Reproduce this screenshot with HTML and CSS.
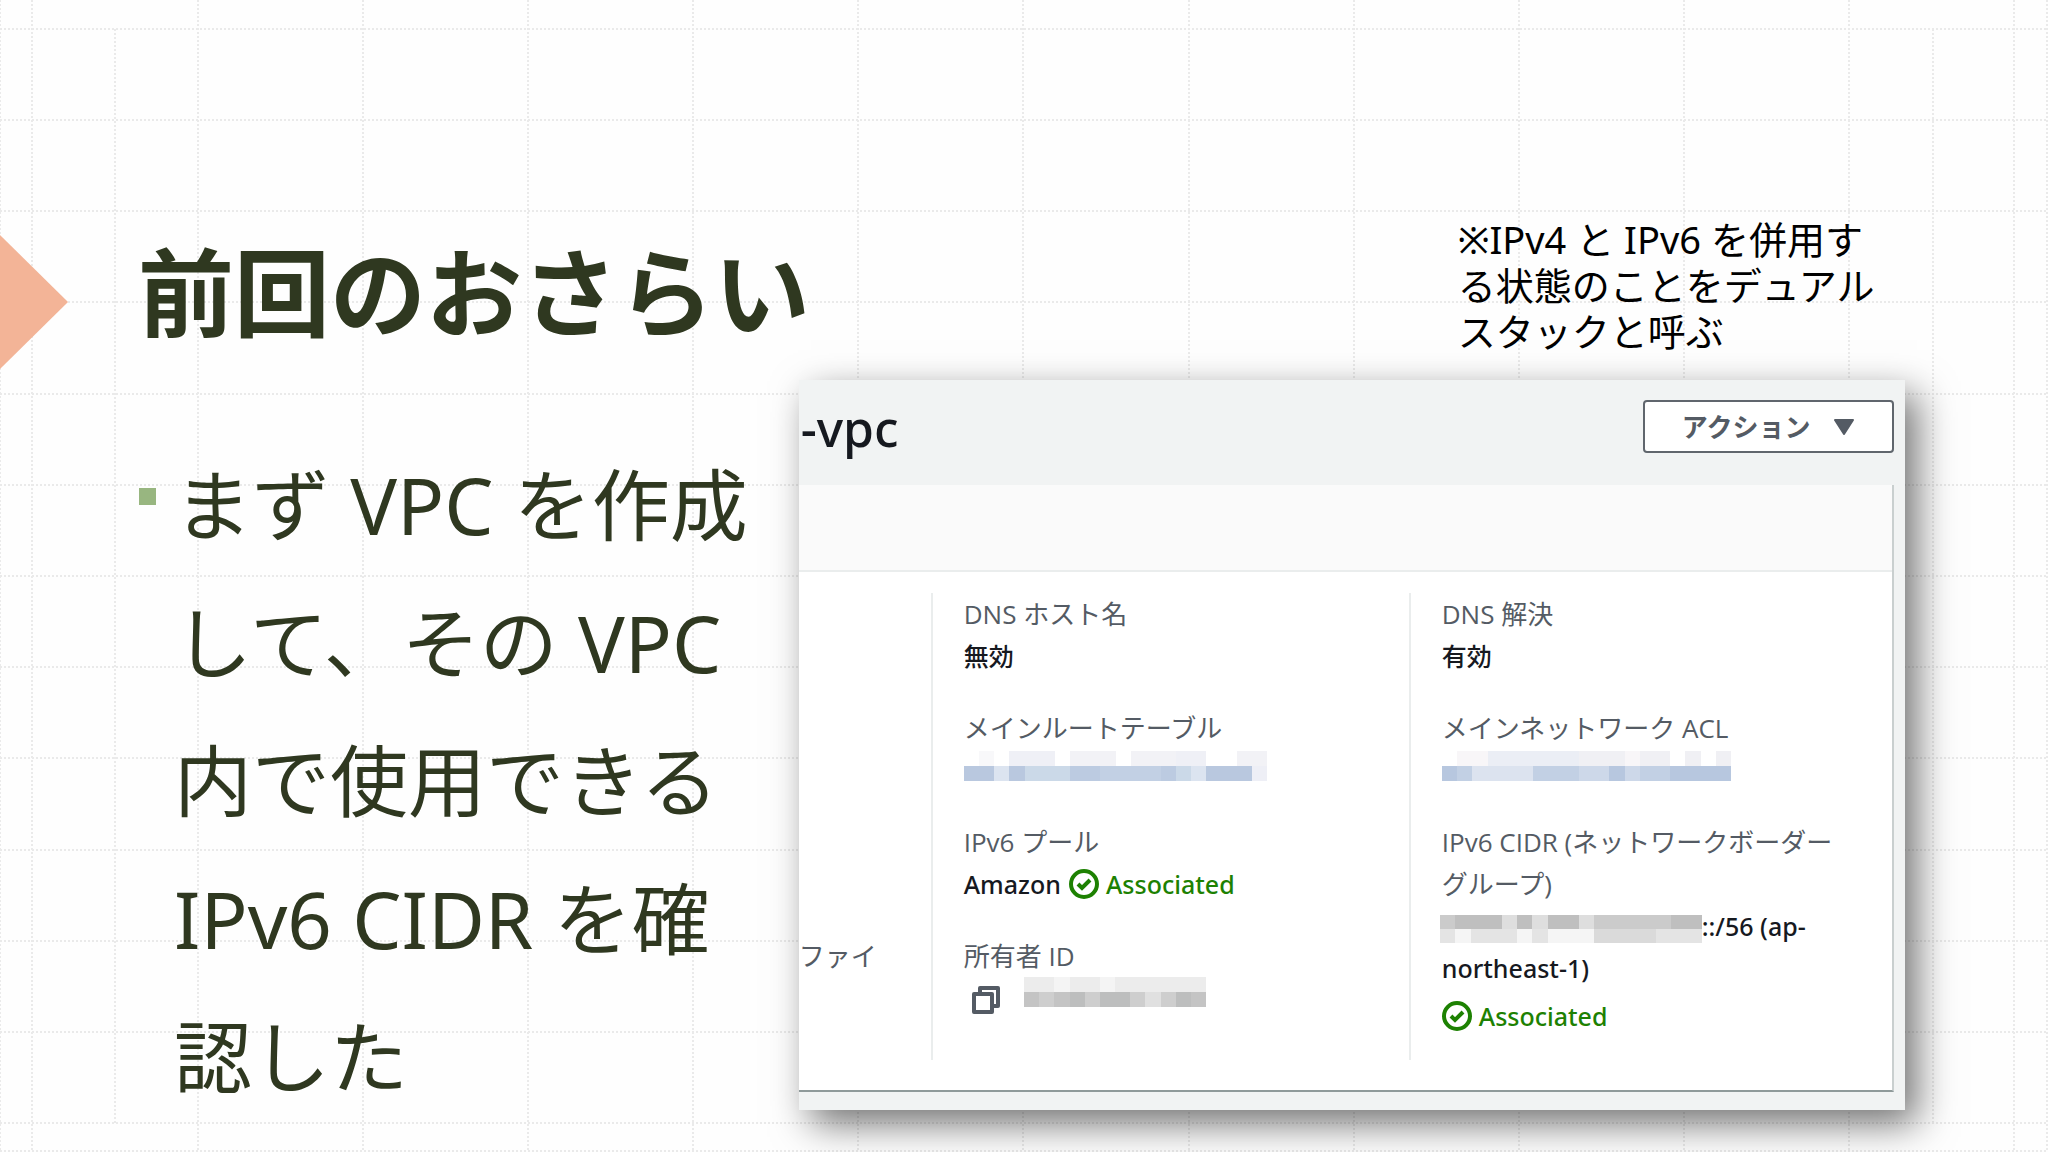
FILE: index.html
```html
<!DOCTYPE html>
<html lang="ja">
<head>
    <meta charset="UTF-8">
    <meta name="viewport" content="width=device-width, initial-scale=1.0">
    <title>前回のおさらい</title>
    <link rel="stylesheet" href="styles.css">
</head>
<body>
    <main class="slide">
        <svg class="grid-lines" viewBox="0 0 2048 1152" preserveAspectRatio="none" aria-hidden="true">
            <path d="M0 29H2048M0 120H2048M0 211H2048M0 302H2048M0 394H2048M0 485H2048M0 576H2048M0 667H2048M0 758H2048M0 850H2048M0 941H2048M0 1032H2048M0 1123H2048M0 1151H2048"/>
            <path d="M0 0V1152M32 0V1152M115 29V1123M198 0V1152M363 0V1152M528 0V1152M693 0V1152M858 0V1152M1023 0V1152M1189 0V1152M1354 0V1152M1519 0V1152M1684 0V1152M1849 0V1152M1933 29V1123M2014 0V1152M2047 0V1152"/>
        </svg>
        <svg class="marker" width="68" height="134" viewBox="0 0 68 134" aria-hidden="true">
            <path d="M0 0L68 67L0 134Z" fill="#f3b497"/>
        </svg>

        <section class="summary">
            <h1>前回のおさらい</h1>
            <ul>
                <li>まず VPC を作成して、その VPC 内で使用できる IPv6 CIDR を確認した</li>
            </ul>
        </section>

        <section class="detail">
            <p class="note">※IPv4 と IPv6 を併用する状態のことをデュアルスタックと呼ぶ</p>

            <div class="console">
                <header class="console-header">
                    <h2>-vpc</h2>
                    <button type="button" class="action">アクション
                        <svg width="20" height="16" viewBox="0 0 20 16" aria-hidden="true"><path d="M1 1H19L10 15Z" fill="#545b64" stroke="#545b64" stroke-width="2" stroke-linejoin="round"/></svg>
                    </button>
                </header>
                <div class="card">
                    <div class="card-header"></div>
                    <div class="columns">
                        <div class="column column-first">
                            <div class="label">ファイ</div>
                        </div>
                        <dl class="column">
                            <div class="field">
                                <dt>DNS ホスト名</dt>
                                <dd>無効</dd>
                            </div>
                            <div class="field">
                                <dt>メインルートテーブル</dt>
                                <dd class="masked">
                                    <svg class="mosaic" width="303" height="30" viewBox="0 0 20 2" preserveAspectRatio="none">
                                        <path fill="#f8f8fa" d="M1 0h1v1h-1z"/>
                                        <path fill="#eff0f6" d="M3 0h3v1h-3zM14 0h2v1h-2z"/>
                                        <path fill="#f2f2f6" d="M7 0h3v1h-3zM11 0h3v1h-3zM18 0h2v1h-2z"/>
                                        <path fill="#b9c8df" d="M0 1h2v1h-2zM3 1h1v1h-1zM16 1h3v1h-3z"/>
                                        <path fill="#dce4f0" d="M2 1h1v1h-1zM15 1h1v1h-1z"/>
                                        <path fill="#cbd9e8" d="M4 1h3v1h-3zM14 1h1v1h-1z"/>
                                        <path fill="#bccbe1" d="M7 1h2v1h-2zM13 1h1v1h-1z"/>
                                        <path fill="#c2d0e4" d="M9 1h4v1h-4z"/>
                                        <path fill="#eeeff6" d="M19 1h1v1h-1z"/>
                                    </svg>
                                </dd>
                            </div>
                            <div class="field">
                                <dt>IPv6 プール</dt>
                                <dd class="status-line">Amazon
                                    <span class="status"><svg width="30" height="30" viewBox="0 0 30 30"><circle cx="15" cy="15" r="13"/><path d="M9 15L13 19L21 11"/></svg>Associated</span>
                                </dd>
                            </div>
                            <div class="field">
                                <dt>所有者 ID</dt>
                                <dd class="owner">
                                    <button type="button" class="copy" aria-label="コピー">
                                        <svg width="28" height="28" viewBox="0 0 28 28"><path d="M8 7V2H26V20H21M2 8H20V26H2Z"/></svg>
                                    </button>
                                    <svg class="mosaic" width="182" height="30" viewBox="0 0 12 2" preserveAspectRatio="none">
                                        <path fill="#ececec" d="M0 0h12v1h-12z"/>
                                        <path fill="#f4f4f4" d="M2 0h1v1h-1zM5 0h1v1h-1z"/>
                                        <path fill="#c4c4c4" d="M0 1h12v1h-12z"/>
                                        <path fill="#cecece" d="M1 1h1v1h-1zM4 1h1v1h-1zM7 1h1v1h-1zM9 1h1v1h-1z"/>
                                        <path fill="#e0e0e0" d="M8 1h1v1h-1z"/>
                                        <path fill="#bdbebe" d="M3 1h1v1h-1zM5 1h2v1h-2zM10 1h1v1h-1z"/>
                                    </svg>
                                </dd>
                            </div>
                        </dl>
                        <dl class="column">
                            <div class="field">
                                <dt>DNS 解決</dt>
                                <dd>有効</dd>
                            </div>
                            <div class="field">
                                <dt>メインネットワーク ACL</dt>
                                <dd class="masked">
                                    <svg class="mosaic" width="289" height="30" viewBox="0 0 19 2" preserveAspectRatio="none">
                                        <path fill="#f8f6f8" d="M1 0h2v1h-2zM12 0h1v1h-1z"/>
                                        <path fill="#ebeef5" d="M3 0h6v1h-6z"/>
                                        <path fill="#f0f0f4" d="M9 0h3v1h-3zM13 0h2v1h-2zM16 0h1v1h-1zM18 0h1v1h-1z"/>
                                        <path fill="#b7c7df" d="M0 1h1v1h-1zM11 1h1v1h-1zM15 1h4v1h-4z"/>
                                        <path fill="#c2d0e4" d="M1 1h1v1h-1zM6 1h3v1h-3zM13 1h2v1h-2z"/>
                                        <path fill="#dce3ef" d="M2 1h4v1h-4z"/>
                                        <path fill="#cdd8e9" d="M9 1h2v1h-2zM12 1h1v1h-1z"/>
                                    </svg>
                                </dd>
                            </div>
                            <div class="field">
                                <dt>IPv6 CIDR (ネットワークボーダーグループ)</dt>
                                <dd>
                                    <svg class="mosaic-inline" width="262" height="28" viewBox="0 0 17 2" preserveAspectRatio="none">
                                        <path fill="#cbcbcb" d="M0 0h17v1h-17z"/>
                                        <path fill="#bfbfbf" d="M1 0h3v1h-3zM5 0h1v1h-1zM7 0h2v1h-2zM15 0h2v1h-2z"/>
                                        <path fill="#dedede" d="M4 0h1v1h-1zM6 0h1v1h-1zM9 0h1v1h-1z"/>
                                        <path fill="#e4e4e4" d="M0 1h17v1h-17z"/>
                                        <path fill="#f5f5f5" d="M1 1h1v1h-1zM5 1h1v1h-1zM7 1h3v1h-3z"/>
                                        <path fill="#dadada" d="M10 1h4v1h-4z"/>
                                    </svg>::/56 (ap-northeast-1)
                                    <span class="status status-block"><svg width="30" height="30" viewBox="0 0 30 30"><circle cx="15" cy="15" r="13"/><path d="M9 15L13 19L21 11"/></svg>Associated</span>
                                </dd>
                            </div>
                        </dl>
                    </div>
                </div>
            </div>
        </section>
    </main>
</body>
</html>
```
FILE: styles.css
```css
* {
    box-sizing: border-box;
}
body {
    margin: 0;
    background-color: #fefefe;
    font-family: "Noto Sans", "Noto Sans CJK JP", sans-serif;
}
h1, h2, p, ul, dl, dd {
    margin: 0;
    padding: 0;
}
.slide {
    position: relative;
    display: flex;
    min-height: 100vh;
    overflow: hidden;
}

/* background decoration */
.grid-lines {
    position: absolute;
    top: 0;
    left: 0;
    width: 100%;
    height: 100%;
    fill: none;
    stroke: #eaeaea;
    stroke-width: 2;
    stroke-dasharray: 2 2;
}
.marker {
    position: absolute;
    top: 235px;
    left: 0;
}

/* left side */
.summary {
    position: relative;
    width: 39%;
    padding: 220px 24px 0 138px;
    color: #2f3820;
}
h1 {
    font-size: 96px;
    line-height: 144px;
    white-space: nowrap;
}
ul {
    margin-top: 72px;
    list-style: none;
}
li {
    position: relative;
    padding-left: 36px;
    font-size: 78px;
    line-height: 138px;
}
li::before {
    content: "";
    position: absolute;
    top: 52px;
    left: 1px;
    width: 17px;
    height: 17px;
    background-color: #98b680;
}

/* right side */
.detail {
    position: relative;
    width: 54%;
    padding-top: 216px;
}
.note {
    width: 430px;
    margin: 0 17px 26px auto;
    color: #000;
    font-size: 38px;
    line-height: 46px;
}
.console {
    padding: 0 11px 18px 0;
    overflow: hidden;
    background-color: #f1f3f3;
    box-shadow: 12px 14px 36px rgba(0, 0, 0, 0.55);
    font-family: "Open Sans", "Noto Sans CJK JP", sans-serif;
}
.console-header {
    display: flex;
    justify-content: space-between;
    align-items: flex-start;
    height: 105px;
    padding-top: 20px;
}
h2 {
    padding-left: 2px;
    color: #16191f;
    font-family: "Noto Sans", sans-serif;
    font-size: 50px;
    font-weight: 500;
    line-height: 56px;
}
.action {
    display: flex;
    justify-content: center;
    align-items: center;
    gap: 24px;
    width: 251px;
    height: 53px;
    padding: 0;
    border: 2px solid #60666d;
    border-radius: 4px;
    background-color: #fff;
    color: #545b64;
    font-family: inherit;
    font-size: 26px;
    font-weight: bold;
    line-height: 36px;
}
.card {
    border-right: 2px solid #c9cfcf;
    border-bottom: 2px solid #8f9a9a;
    background-color: #fff;
}
.card-header {
    height: 87px;
    border-bottom: 2px solid #eaeded;
    background-color: #fafafa;
}
.columns {
    display: grid;
    grid-template-columns: 132px 99fr 100fr;
    padding: 21px 0 30px;
}
.column {
    display: flex;
    flex-direction: column;
    gap: 30px;
    min-height: 467px;
    padding: 0 40px 0 31px;
    border-left: 2px solid #eaeded;
}
.column-first {
    padding: 342px 0 0;
    border-left: none;
}
.label, dt {
    color: #545b64;
    font-size: 26px;
    font-weight: 400;
    line-height: 42px;
}
dd {
    min-height: 42px;
    color: #16191f;
    font-family: "Noto Sans", "Noto Sans CJK JP", sans-serif;
    font-size: 25px;
    font-weight: 500;
    line-height: 42px;
}
.masked {
    padding-top: 2px;
}
.mosaic {
    display: block;
    shape-rendering: crispEdges;
}
.mosaic-inline {
    margin-left: -2px;
    vertical-align: middle;
    shape-rendering: crispEdges;
}
.status-line {
    display: flex;
    gap: 8px;
}
.status {
    display: flex;
    align-items: center;
    gap: 7px;
    color: #1d8102;
}
.status svg {
    fill: none;
    stroke: #1d8102;
    stroke-width: 4;
}
.status-block {
    margin-top: 6px;
}
.owner {
    display: flex;
    gap: 24px;
    padding-left: 8px;
}
.copy {
    height: 40px;
    padding: 5px 0 0;
    border: none;
    background: none;
}
.copy svg {
    display: block;
    fill: none;
    stroke: #545b64;
    stroke-width: 4;
    stroke-linejoin: round;
}
```
